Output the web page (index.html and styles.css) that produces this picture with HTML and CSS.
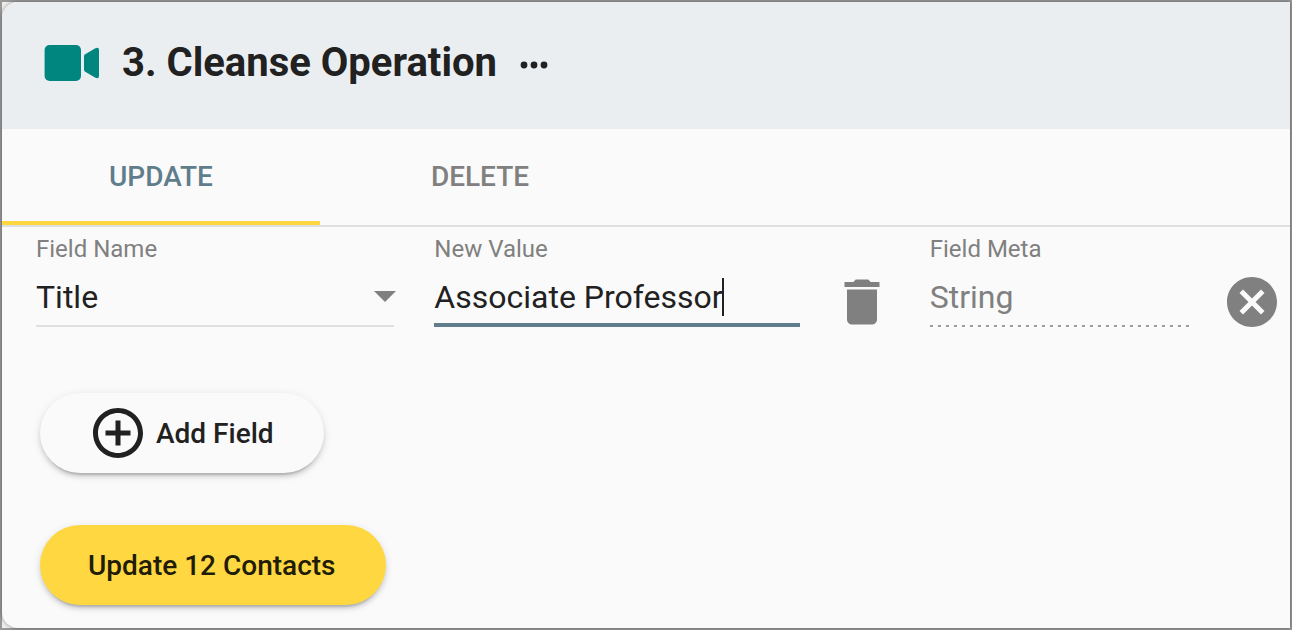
FILE: index.html
```html
<!DOCTYPE html>
<html lang="en">
<head>
<meta charset="utf-8">
<meta name="viewport" content="width=device-width, initial-scale=1">
<title>Cleanse Operation</title>
<link rel="stylesheet" href="styles.css">
</head>
<body>
<main class="frame">
  <section class="card">
    <header class="card-header">
      <svg class="camera" viewBox="0 0 56 38" aria-hidden="true">
        <rect x="0.600" y="1" width="36.400" height="36" rx="5"/>
        <path d="M40 12.500Q40 11 41.200 10.200L51 4.400Q55 2.500 55 6V32Q55 35.500 51 33.600L41.200 27.800Q40 27 40 25.500Z"/>
      </svg>
      <h1 class="title">3. Cleanse Operation</h1>
      <button class="more" type="button" aria-label="More options">
        <svg class="dots" viewBox="0 0 30 8" aria-hidden="true"><circle cx="5" cy="4" r="3.400"/><circle cx="15" cy="4" r="3.400"/><circle cx="25" cy="4" r="3.400"/></svg>
      </button>
    </header>

    <div class="tabs" role="tablist">
      <button class="tab tab-active" type="button" role="tab" aria-selected="true">UPDATE</button>
      <button class="tab" type="button" role="tab" aria-selected="false">DELETE</button>
    </div>

    <form class="form">
      <div class="row">
        <div class="field field-name">
          <label class="label" for="name">Field Name</label>
          <div class="control">
            <select class="input" id="name"><option>Title</option></select>
            <svg class="arrow" viewBox="0 0 22 11" aria-hidden="true"><path d="M0 0H22L11 11Z"/></svg>
          </div>
        </div>
        <div class="field">
          <label class="label" for="value">New Value</label>
          <div class="control">
            <input class="input input-focus" id="value" type="text" value="Associate Professor">
            <span class="caret"></span>
          </div>
        </div>
        <button class="icon-button trash" type="button" aria-label="Clear value">
          <svg class="icon" viewBox="0 0 24 24" aria-hidden="true"><path d="M6 19c0 1.100.9 2 2 2h8c1.100 0 2-.9 2-2V7H6v12zM19 4h-3.500l-1-1h-5l-1 1H5v2h14V4z"/></svg>
        </button>
        <div class="field">
          <label class="label" for="meta">Field Meta</label>
          <div class="control">
            <input class="input input-disabled" id="meta" type="text" value="String" disabled>
          </div>
        </div>
        <button class="icon-button" type="button" aria-label="Remove field">
          <svg class="icon" viewBox="0 0 24 24" aria-hidden="true"><path d="M12 2C6.470 2 2 6.470 2 12s4.470 10 10 10 10-4.470 10-10S17.530 2 12 2zm5 13.590L15.590 17 12 13.410 8.410 17 7 15.590 10.590 12 7 8.410 8.410 7 12 10.590 15.590 7 17 8.410 13.410 12 17 15.590z"/></svg>
        </button>
      </div>

      <div class="actions">
        <button class="pill pill-add" type="button">
          <svg class="icon" viewBox="0 0 24 24" aria-hidden="true"><path d="M13 7h-2v4H7v2h4v4h2v-4h4v-2h-4V7zm-1-5C6.480 2 2 6.480 2 12s4.480 10 10 10 10-4.480 10-10S17.520 2 12 2zm0 18c-4.410 0-8-3.590-8-8s3.590-8 8-8 8 3.590 8 8-3.590 8-8 8z"/></svg>
          <span>Add Field</span>
        </button>
        <button class="pill pill-primary" type="button">Update 12 Contacts</button>
      </div>
    </form>
  </section>
</main>
</body>
</html>
```
FILE: styles.css
```css
* {
  box-sizing: border-box;
}

body {
  margin: 0;
  font-family: Roboto, "Liberation Sans", sans-serif;
  color: #212121;
}

button,
input,
select {
  margin: 0;
  padding: 0;
  border: 0;
  background: none;
  font: inherit;
  color: inherit;
}

.frame {
  display: flex;
  min-height: 100vh;
  border: 2px solid #999;
  background: #f0efee;
}

.card {
  flex: 1;
  min-width: 0;
  overflow: hidden;
  border-radius: 16px 0 0 16px;
  background: #fafafa;
  box-shadow: 0 0 4px rgba(0, 0, 0, 0.4);
}

.card-header {
  display: flex;
  align-items: center;
  height: 127px;
  padding: 0 42px 6px;
  background: #ebeef1;
}

.camera {
  width: 56px;
  height: 38px;
  fill: #00857f;
}

.title {
  margin: 0 0 0 22px;
  font-size: 40px;
  line-height: 48px;
  font-weight: 700;
}

.more {
  display: flex;
  margin-left: 22px;
  padding-top: 4px;
}

.dots {
  width: 30px;
  height: 8px;
  fill: #212121;
}

.tabs {
  display: flex;
  border-bottom: 2px solid #e0e0e0;
}

.tab {
  width: 320px;
  height: 96px;
  padding-top: 2px;
  border-bottom: 4px solid transparent;
  font-size: 28px;
  font-weight: 500;
  color: #808080;
}

.tab-active {
  width: 318px;
  border-color: #ffd740;
  color: #607d8b;
}

.row {
  display: grid;
  grid-template-columns: 366fr 365fr 66px 260fr 60px;
  column-gap: 32px;
  padding: 6px 8px 0 34px;
}

.field {
  min-width: 0;
}

.field-name {
  margin-right: 8px;
}

.label {
  display: block;
  font-size: 24px;
  line-height: 32px;
  color: #808080;
}

.control {
  position: relative;
}

.input {
  display: block;
  width: 100%;
  height: 62px;
  padding-top: 4px;
  border-bottom: 2px solid #e0e0e0;
  border-radius: 0;
  outline: 0;
  appearance: none;
  font-size: 32px;
}

.input-focus {
  padding-top: 6px;
  border-bottom: 4px solid #607d8b;
}

.input-disabled {
  padding-top: 2px;
  border-bottom: 0;
  background: repeating-linear-gradient(90deg, #9e9e9e 0 3px, transparent 3px 8px) bottom / 100% 2px no-repeat;
  color: #808080;
}

.arrow {
  position: absolute;
  top: 26px;
  right: -2px;
  width: 22px;
  height: 11px;
  fill: #808080;
  pointer-events: none;
}

.caret {
  position: absolute;
  top: 13px;
  left: 288px;
  width: 2px;
  height: 38px;
  background: #212121;
}

.icon {
  flex: none;
  display: block;
  width: 60px;
  height: 60px;
  fill: currentColor;
}

.icon-button {
  align-self: start;
  width: 60px;
  margin-top: 39px;
  color: #808080;
}

.actions {
  display: flex;
  flex-direction: column;
  align-items: flex-start;
  gap: 52px;
  padding: 61px 38px 22px;
}

.pill {
  display: flex;
  align-items: center;
  height: 80px;
  padding: 0 50px 0 48px;
  border-radius: 40px;
  background: #fafafa;
  box-shadow: 0 6px 2px -4px rgba(0, 0, 0, 0.15), 0 4px 4px rgba(0, 0, 0, 0.11), 0 2px 10px rgba(0, 0, 0, 0.1);
  font-size: 28px;
  font-weight: 500;
}

.pill-add {
  gap: 8px;
}

.pill-primary {
  background: #ffd740;
  color: #211c08;
}
```
